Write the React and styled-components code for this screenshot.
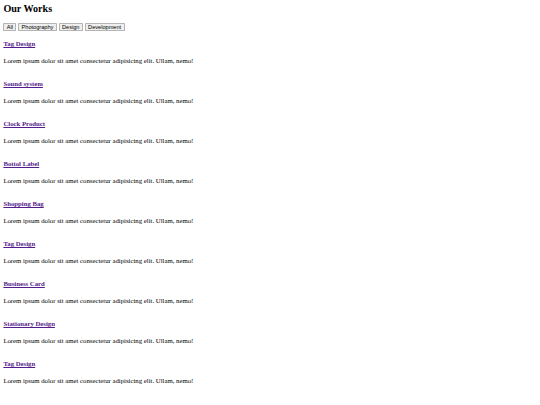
import styled, { createGlobalStyle } from 'styled-components';

// the reference is a 1280px-wide page shown at 540px, so every size is scaled
const k = 540 / 1280;
const px = (v) => `${(v * k).toFixed(3)}px`;

const GlobalStyle = createGlobalStyle`
  html, body {
    margin: 0;
    background: #ffffff;
  }
  body {
    font-family: 'Liberation Serif', 'Times New Roman', serif;
    color: #000000;
  }
`;

const Page = styled.main`
  padding: ${px(8)};
`;

const Title = styled.h2`
  font-size: ${px(24)};
  font-weight: bold;
  line-height: ${px(27.6)};
  margin: 0 0 ${px(18)};
`;

const Filters = styled.div`
  display: flex;
  gap: ${px(4.5)};
  align-items: center;
`;

const FilterButton = styled.button`
  box-sizing: border-box;
  font-family: 'Liberation Sans', Arial, sans-serif;
  font-size: ${px(13.333)};
  line-height: ${px(15)};
  color: #000000;
  background: #efefef;
  border: 1px solid #b4b4b4;
  border-radius: ${px(2)};
  padding: 0 ${px(5.6)};
  height: ${px(21)};
  cursor: pointer;

  &:hover {
    background: #e5e5e5;
  }
`;

const WorkList = styled.div`
  display: flex;
  flex-direction: column;
`;

const WorkItem = styled.article`
  display: flow-root;
`;

const WorkTitle = styled.h4`
  font-size: ${px(16)};
  font-weight: bold;
  line-height: ${px(18.4)};
  margin: ${px(21.28)} 0;
`;

const WorkLink = styled.a`
  color: #551a8b;
  text-decoration: underline;
`;

const WorkText = styled.p`
  font-size: ${px(16)};
  line-height: ${px(18.4)};
  margin: ${px(16)} 0 ${px(15.4)};
`;

const filters = ['All', 'Photography', 'Design', 'Development'];

const works = [
  'Tag Design',
  'Sound system',
  'Clock Product',
  'Bottol Label',
  'Shopping Bag',
  'Tag Design',
  'Business Card',
  'Stationary Design',
  'Tag Design',
];

function App() {
  return (
    <>
      <GlobalStyle />
      <Page>
        <Title>Our Works</Title>
        <Filters>
          {filters.map((f) => (
            <FilterButton key={f}>{f}</FilterButton>
          ))}
        </Filters>
        <WorkList>
          {works.map((w, i) => (
            <WorkItem key={i}>
              <WorkTitle>
                <WorkLink href="#">{w}</WorkLink>
              </WorkTitle>
              <WorkText>
                Lorem ipsum dolor sit amet consectetur adipisicing elit. Ullam, nemo!
              </WorkText>
            </WorkItem>
          ))}
        </WorkList>
      </Page>
    </>
  );
}

export default App;
